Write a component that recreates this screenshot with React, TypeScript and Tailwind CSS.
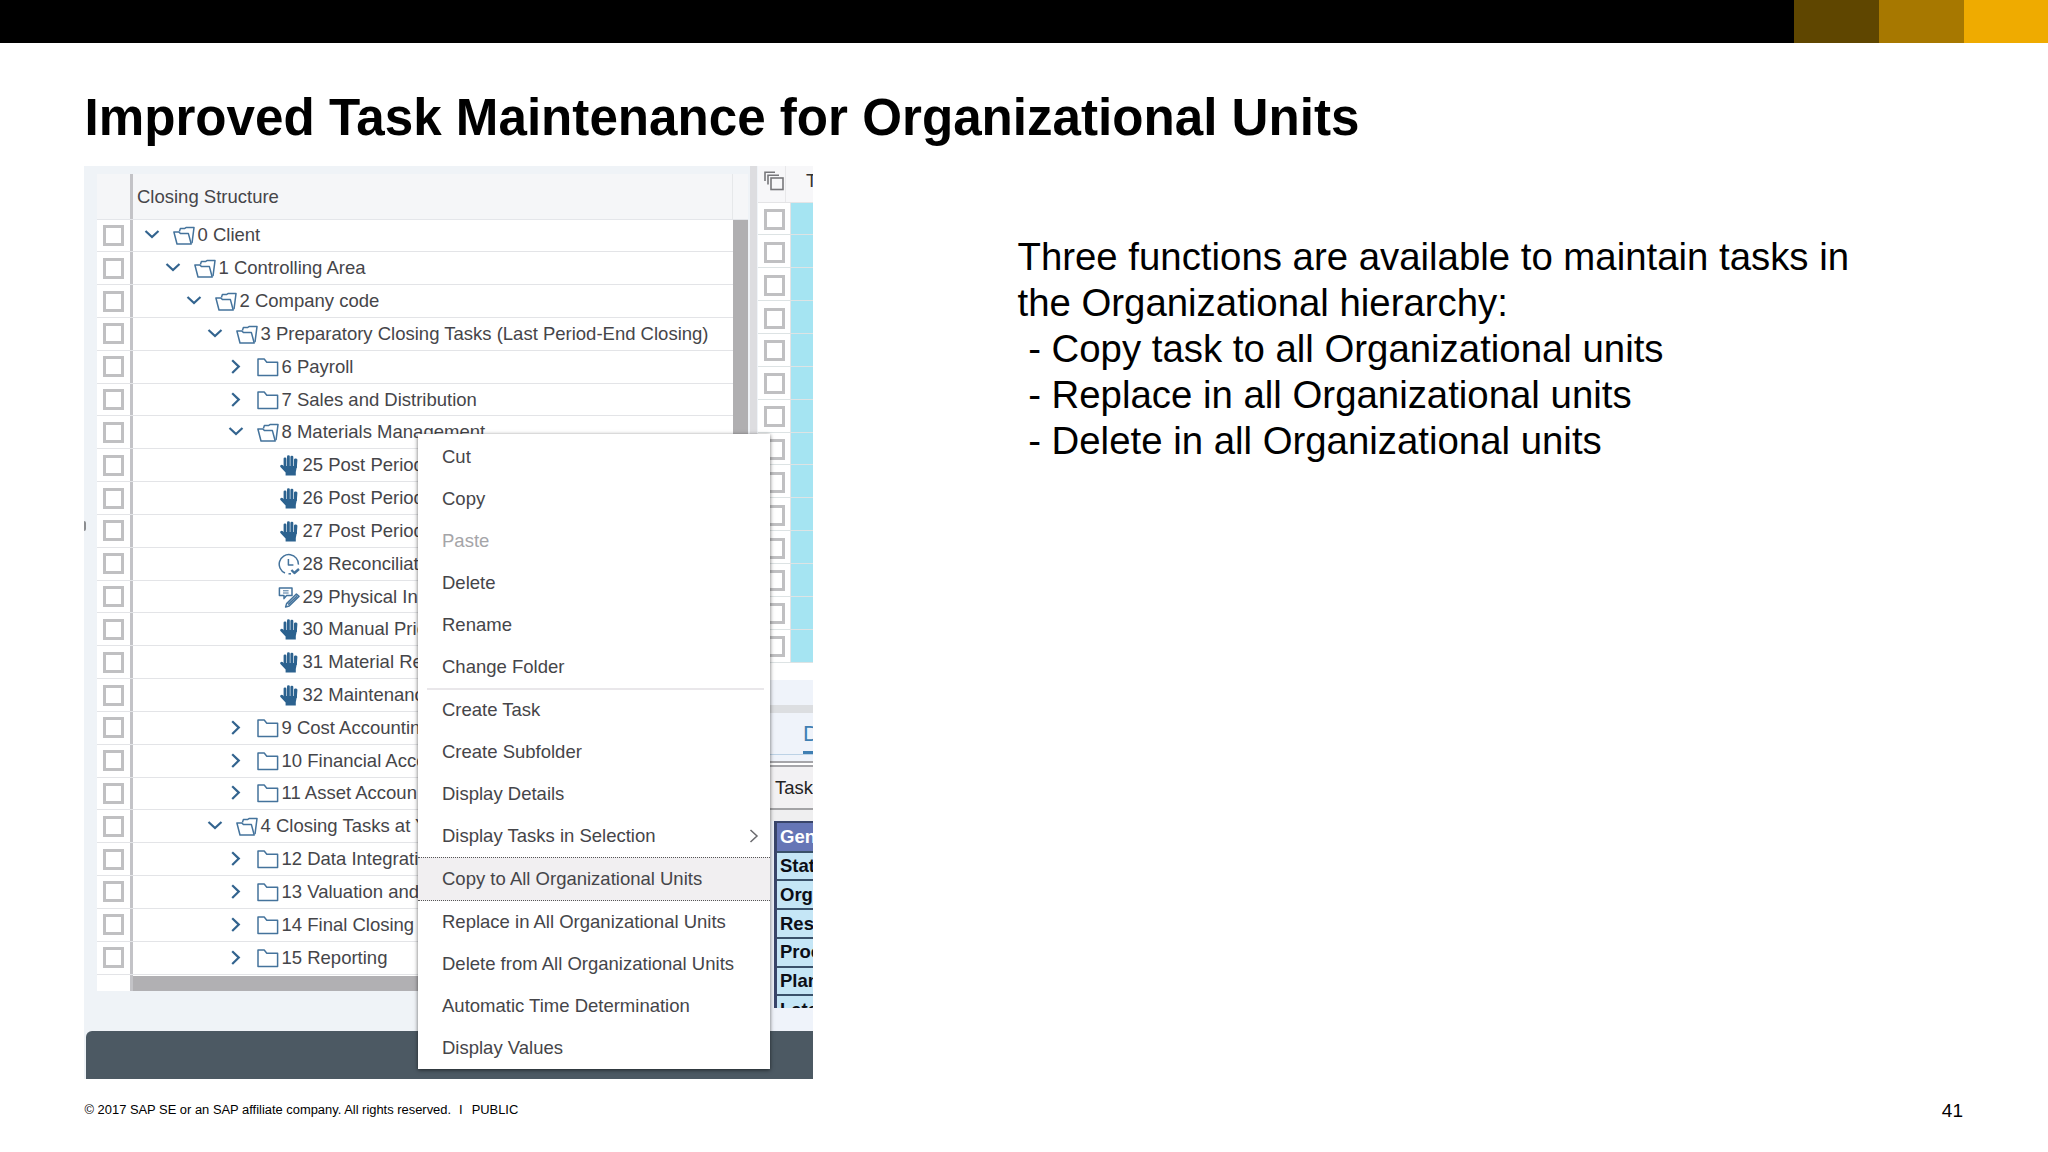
import { clsx } from "clsx";

type IconKind = "open" | "closed" | "hand" | "clock" | "note";

type TreeRow = { label: string; level: number; icon: IconKind };

const ROWS: TreeRow[] = [
  { label: "0 Client", level: 0, icon: "open" },
  { label: "1 Controlling Area", level: 1, icon: "open" },
  { label: "2 Company code", level: 2, icon: "open" },
  { label: "3 Preparatory Closing Tasks (Last Period-End Closing)", level: 3, icon: "open" },
  { label: "6 Payroll", level: 4, icon: "closed" },
  { label: "7 Sales and Distribution", level: 4, icon: "closed" },
  { label: "8 Materials Management", level: 4, icon: "open" },
  { label: "25 Post Period", level: 5, icon: "hand" },
  { label: "26 Post Period", level: 5, icon: "hand" },
  { label: "27 Post Period", level: 5, icon: "hand" },
  { label: "28 Reconciliat", level: 5, icon: "clock" },
  { label: "29 Physical In", level: 5, icon: "note" },
  { label: "30 Manual Pric", level: 5, icon: "hand" },
  { label: "31 Material Re", level: 5, icon: "hand" },
  { label: "32 Maintenanc", level: 5, icon: "hand" },
  { label: "9 Cost Accountin", level: 4, icon: "closed" },
  { label: "10 Financial Acco", level: 4, icon: "closed" },
  { label: "11 Asset Accoun", level: 4, icon: "closed" },
  { label: "4 Closing Tasks at Y", level: 3, icon: "open" },
  { label: "12 Data Integrati", level: 4, icon: "closed" },
  { label: "13 Valuation and", level: 4, icon: "closed" },
  { label: "14 Final Closing", level: 4, icon: "closed" },
  { label: "15 Reporting", level: 4, icon: "closed" },
];

const INDENT = ["pl-[10px]", "pl-[31px]", "pl-[52px]", "pl-[73px]", "pl-[94px]", "pl-[115px]"];

const MENU_TOP = ["Cut", "Copy", "Paste", "Delete", "Rename", "Change Folder"];
const MENU_MID = ["Create Task", "Create Subfolder", "Display Details", "Display Tasks in Selection"];
const MENU_END = [
  "Replace in All Organizational Units",
  "Delete from All Organizational Units",
  "Automatic Time Determination",
  "Display Values",
];

const DETAILS = ["Status", "Organization", "Responsible", "Processor", "Planned", "Latest"];

function Chevron({ open }: { open: boolean }) {
  return (
    <svg viewBox="0 0 18 18" className="h-[18px] w-[18px] shrink-0" fill="none" stroke="#33648f" strokeWidth="2.2">
      <path d={open ? "M2.5 5 L9 11 L15.5 5" : "M5.2 2.2 L11.8 8.6 L5.2 15"} />
    </svg>
  );
}

function RowIcon({ kind }: { kind: IconKind }) {
  return (
    <svg
      viewBox="0 0 22 22"
      className="h-[22px] w-[22px] shrink-0"
      fill="none"
      stroke="#44739c"
      strokeWidth="1.5"
      strokeLinejoin="round"
    >
      {kind === "open" && (
        <>
          <path d="M0.9 8 H5.8 L7.6 9.6 H15.4 L18.2 20 H4 Z" />
          <path d="M6.4 7.4 L7.4 4.6 H11.4 L13 3.6 H21 L19 19.2" />
        </>
      )}
      {kind === "closed" && <path d="M1 19.6 V3 H7.2 L9.8 6.2 H20.6 V19.6 Z" />}
      {kind === "hand" && (
        <g fill="#2c628f" stroke="none">
          <path d="M6 12 H19 L17.8 18 V21.4 H7.6 V18.6 L2.2 12.8 C2 10.8 4 10.2 5.2 11.6 L6.6 13.2 Z" />
          <rect x="5.6" y="3.4" width="2.8" height="12" rx="1.3" />
          <rect x="9" y="1.2" width="2.8" height="14" rx="1.3" />
          <rect x="12.4" y="1.8" width="2.9" height="13" rx="1.3" />
          <path d="M16 5.6 C16 4 19.6 4 19.4 6 L18.8 14 H15.9 Z" />
        </g>
      )}
      {kind === "clock" && (
        <>
          <path d="M7 20 A9.6 9.6 0 1 1 20.4 11.6" />
          <path d="M10.4 6 V12 H15.4" />
          <path d="M10.5 20.8 H13" />
          <path d="M13.4 17 L16.4 20 L21 16" strokeWidth="2.4" />
        </>
      )}
      {kind === "note" && (
        <>
          <path d="M1.4 2 H14 V9.6 H8.6 L6 12.6 V9.6 H1.4 Z" />
          <path d="M5 4.8 H10.6 M5 7 H10.6" strokeWidth="1" />
          <path d="M7.6 21 L8.6 17.6 L18.4 8 L21 10.4 L11.2 20 Z M10.2 18.6 L19 10" />
        </>
      )}
    </svg>
  );
}

function Checkbox() {
  return <div className="h-[21px] w-[21px] shrink-0 border-[3px] border-[#c0c0c2] bg-white" />;
}

function ClosingTree() {
  return (
    <div className="mt-2 ml-[13px] flex h-[817px] w-[651px] flex-col bg-white text-[18.5px] text-[#454549]">
      <div className="flex h-[46px] shrink-0 border-b border-[#e4e6ea] bg-[#f5f6f8]">
        <div className="w-[36px] border-r-[3px] border-[#c3c3c7]" />
        <div className="flex-1 pt-[12px] pl-[4px] leading-[22px]">Closing Structure</div>
        <div className="w-4 border-l border-[#e6e8ea]" />
      </div>
      <div className="flex h-[755px] shrink-0">
        <div className="flex flex-1 flex-col">
          {ROWS.map((row) => (
            <div key={row.label} className="flex min-h-0 flex-1 border-b border-[#e3e4e7]">
              <div className="flex w-[36px] shrink-0 items-center border-r-[3px] border-[#c3c3c7] pl-[6px]">
                <Checkbox />
              </div>
              <div className={clsx("flex items-center", INDENT[row.level])}>
                {row.level < 5 ? <Chevron open={row.icon === "open"} /> : <span className="w-[18px]" />}
                <span className="w-[12px]" />
                <RowIcon kind={row.icon} />
                <span className="pl-[2.5px] leading-[22px] whitespace-nowrap">{row.label}</span>
              </div>
            </div>
          ))}
        </div>
        <div className="w-[15px] bg-[#b0afb1]" />
      </div>
      <div className="flex flex-1">
        <div className="w-[36px] border-r-[3px] border-[#c3c3c7]" />
        <div className="mt-[1px] flex-1 bg-[#b1b0b3]" />
      </div>
    </div>
  );
}

function TaskGrid() {
  return (
    <div className="flex h-[514px] flex-col bg-white">
      <div className="flex h-[37px] shrink-0 border-b border-[#e4e4e6] bg-[#f7f7f9]">
        <div className="w-[33px] border-r border-[#e8e8ea] pt-[5px] pl-[5px]">
          <svg viewBox="0 0 22 22" className="h-[22px] w-[22px]" fill="none" stroke="#77777b" strokeWidth="1.6">
            <rect x="8" y="7" width="12" height="11.5" />
            <path d="M5 13.5 V4.2 H16" />
            <path d="M2 10 V1.2 H12" />
          </svg>
        </div>
        <div className="pt-[4px] pl-[15px] text-[18.5px] leading-[22px] text-[#333]">
          <span className="pl-[5px]">T</span>
        </div>
      </div>
      <div className="flex h-[460px] shrink-0 flex-col">
        {Array.from({ length: 14 }, (_, i) => (
          <div key={i} className="flex min-h-0 flex-1 border-b border-[#dde3e4]">
            <div className="flex w-[33px] items-center border-r border-[#e3e3e5] pt-[2px] pl-[6px]">
              <Checkbox />
            </div>
            <div className="flex-1 bg-[#a5e4f2]" />
          </div>
        ))}
      </div>
    </div>
  );
}

function TaskDetails() {
  return (
    <div className="flex flex-1 flex-col bg-[#eff3fa]">
      <div className="h-[25px]" />
      <div className="h-2 bg-[#dcdee1]" />
      <div className="flex h-[42px] justify-end border-b border-[#bcd2e6]">
        <div className="w-[10px] border-b-[3px] border-[#3f7fb3] pt-[10px] text-[22px] leading-[22px] text-[#3f7fb3]">D</div>
      </div>
      <div className="h-[6px]" />
      <div className="h-[6px] border-y-2 border-[#a5a5a9] bg-white" />
      <div className="flex h-[43px] items-center border-b-2 border-[#a3a3a6] bg-[#f2f1f3] pt-[1px] pl-[17px] text-[18.5px] text-[#222]">
        Task
      </div>
      <div className="h-[11px] bg-[#efeff0]" />
      <div className="ml-[16px] h-[187px] overflow-hidden border-t-2 border-l-[3px] border-[#39456a] bg-[#c5e6f6] text-[18.5px] font-bold text-[#0b0e16]">
        <div className="flex h-[28px] items-center bg-[#6676b6] pl-[3px] text-white">General</div>
        {DETAILS.map((name) => (
          <div key={name} className="flex h-[28.8px] items-center border-t-2 border-[#39516a] pl-[3px]">
            {name}
          </div>
        ))}
      </div>
    </div>
  );
}

function MenuItem({ label }: { label: string }) {
  return (
    <div className="flex h-[42px] items-center justify-between pr-[11px] pl-6">
      <span className={clsx(label === "Paste" && "text-[#a5a5a8]")}>{label}</span>
      {label === "Display Tasks in Selection" && (
        <svg viewBox="0 0 10 14" className="h-[14px] w-[10px]" fill="none" stroke="#6a6a6e" strokeWidth="1.5">
          <path d="M1.5 1 L8 7 L1.5 13" />
        </svg>
      )}
    </div>
  );
}

function ContextMenu() {
  return (
    <div className="absolute top-[268px] left-[334px] h-[635px] w-[352px] bg-white pt-[2px] text-[18.5px] leading-[22px] text-[#454549] shadow-[0_1px_4px_rgba(0,0,0,0.6)]">
      {MENU_TOP.map((label) => (
        <MenuItem key={label} label={label} />
      ))}
      <div className="mr-[6px] mb-[-1px] ml-[9px] h-[2px] bg-[#e9e7ea]" />
      {MENU_MID.map((label) => (
        <MenuItem key={label} label={label} />
      ))}
      <div className="border-y border-dotted border-[#555] bg-[#f1eff1]">
        <MenuItem label="Copy to All Organizational Units" />
      </div>
      {MENU_END.map((label) => (
        <MenuItem key={label} label={label} />
      ))}
    </div>
  );
}

export default function App() {
  return (
    <div className="flex h-[1152px] w-[2048px] flex-col overflow-hidden bg-white font-['Liberation_Sans',Arial,sans-serif] text-black">
      <header className="flex h-[42.5px] shrink-0 justify-end bg-black">
        <div className="w-[85px] bg-[#5f4600]" />
        <div className="w-[85px] bg-[#a77800]" />
        <div className="w-[84px] bg-[#efab00]" />
      </header>

      <h1 className="mt-[45px] ml-[84.5px] h-[61px] text-[51.15px] leading-[60px] font-bold whitespace-nowrap">
        Improved Task Maintenance for Organizational Units
      </h1>

      <main className="mt-[17px] flex h-[913px] shrink-0 pl-[84px]">
        <div className="relative flex h-[913px] w-[729px] shrink-0 flex-col bg-[#eff3f7]">
          <div className="flex h-[865px] overflow-hidden">
            <ClosingTree />
            <div className="mr-[1px] ml-[2px] w-[7px] shrink-0 bg-[#dddde0]" />
            <div className="flex min-w-0 flex-1 flex-col overflow-hidden">
              <TaskGrid />
              <TaskDetails />
            </div>
          </div>
          <div className="ml-[2px] flex-1 rounded-tl-md bg-[#4c5963]" />
          <div className="absolute top-[355px] left-0 h-[10px] w-[2px] rounded-r-full bg-[#8b8d90]" />
          <ContextMenu />
        </div>

        <div className="mt-[68px] ml-[204.5px] h-[240px] text-[38.36px] leading-[46.1px] whitespace-pre">
          <p>Three functions are available to maintain tasks in</p>
          <p>the Organizational hierarchy:</p>
          <p>{" - Copy task to all Organizational units"}</p>
          <p>{" - Replace in all Organizational units"}</p>
          <p>{" - Delete in all Organizational units"}</p>
        </div>
      </main>

      <footer className="flex flex-1 items-start justify-between pt-[21px] pr-[85px] pl-[84.5px]">
        <div className="flex pt-[1px] text-[12.92px] leading-[18px]">
          <span>© 2017 SAP SE or an SAP affiliate company. All rights reserved.</span>
          <span className="pl-[8px]">I</span>
          <span className="pl-[9px]">PUBLIC</span>
        </div>
        <div className="text-[19px] leading-[22px]">41</div>
      </footer>
    </div>
  );
}
